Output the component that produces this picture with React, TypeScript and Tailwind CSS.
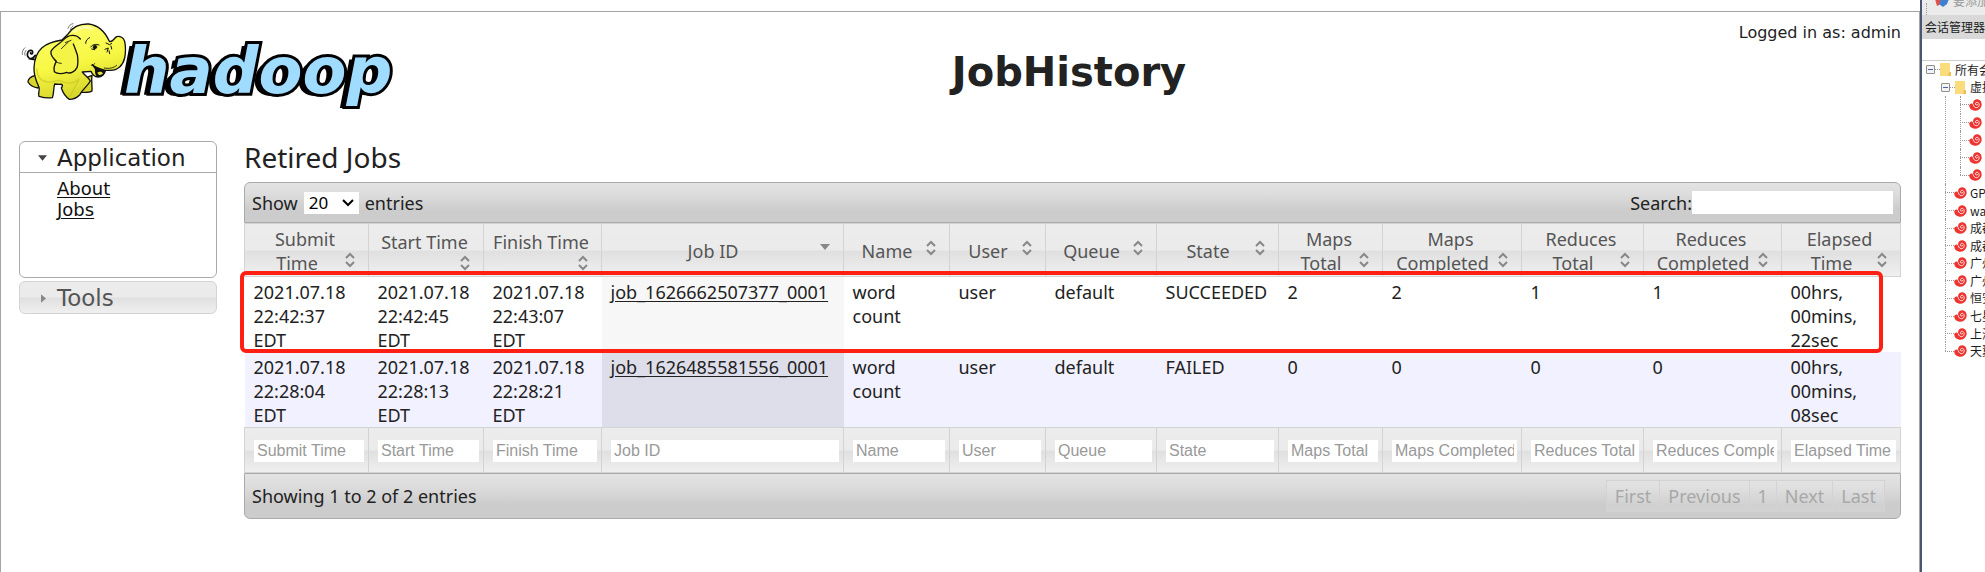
import React from "react";

type Column = { label: string; lines: string[]; width: string; sorted?: boolean };

const columns: Column[] = [
  { label: "Submit Time", lines: ["Submit", "Time"], width: "w-[124px]" },
  { label: "Start Time", lines: ["Start Time"], width: "w-[115px]" },
  { label: "Finish Time", lines: ["Finish Time"], width: "w-[118px]" },
  { label: "Job ID", lines: ["Job ID"], width: "w-[242px]", sorted: true },
  { label: "Name", lines: ["Name"], width: "w-[106px]" },
  { label: "User", lines: ["User"], width: "w-[96px]" },
  { label: "Queue", lines: ["Queue"], width: "w-[111px]" },
  { label: "State", lines: ["State"], width: "w-[122px]" },
  { label: "Maps Total", lines: ["Maps", "Total"], width: "w-[104px]" },
  { label: "Maps Completed", lines: ["Maps", "Completed"], width: "w-[139px]" },
  { label: "Reduces Total", lines: ["Reduces", "Total"], width: "w-[122px]" },
  { label: "Reduces Completed", lines: ["Reduces", "Completed"], width: "w-[138px]" },
  { label: "Elapsed Time", lines: ["Elapsed", "Time"], width: "w-[119px]" },
];

const jobs: string[][] = [
  ["2021.07.18 22:42:37 EDT", "2021.07.18 22:42:45 EDT", "2021.07.18 22:43:07 EDT", "job_1626662507377_0001", "word count", "user", "default", "SUCCEEDED", "2", "2", "1", "1", "00hrs, 00mins, 22sec"],
  ["2021.07.18 22:28:04 EDT", "2021.07.18 22:28:13 EDT", "2021.07.18 22:28:21 EDT", "job_1626485581556_0001", "word count", "user", "default", "FAILED", "0", "0", "0", "0", "00hrs, 00mins, 08sec"],
];

const sessions = ["GP", "wa", "成都", "成都", "广州", "广州", "恒安", "七星", "上海", "天翼"];

const barFill = "bg-[linear-gradient(#e3e3e3,#dcdcdc_30%,#cccccc_70%,#cccccc)]";
const cellFill = "bg-[linear-gradient(#ececec,#ebebeb_48%,#e0e0e0_52%,#f0f0f0)]";

function Elephant() {
  return (
    <svg viewBox="60 60 330 249" className="h-[83px] w-[110px] shrink-0" aria-hidden="true">
      <defs>
        <linearGradient id="hide" x1="0" y1="0" x2="0.3" y2="1">
          <stop offset="0" stopColor="#ffff73" />
          <stop offset="0.6" stopColor="#f7f743" />
          <stop offset="1" stopColor="#d6d52b" />
        </linearGradient>
      </defs>
      <g stroke="#111" strokeWidth="4" strokeLinejoin="round" strokeLinecap="round">
        <path d="M103 178C88 180 78 168 84 156C88 149 98 150 98 157C98 164 90 162 92 158M88 176C96 178 102 172 106 166" fill="none" strokeWidth="5" />
        <path d="M105 226C92 230 84 238 84 246C90 256 99 262 114 264L124 240Z" fill="#d8d62c" />
        <path d="M242 240L276 226C273 242 277 256 276 273C267 279 254 277 243 277Z" fill="#d8d62c" />
        <path
          d="M205 101C218 81 242 71 266 72C292 75 314 93 328 124C338 128 341 115 350 110C360 107 371 113 374 124C377 138 377 158 374 174C369 196 353 211 331 211L316 211C314 223 305 231 294 231C281 231 277 224 273 214L247 216C254 226 267 233 271 243C262 260 246 269 239 285C232 292 222 298 208 298C199 292 189 279 184 264C190 257 189 252 178 253L164 252C160 264 162 282 157 293C145 295 130 293 117 289C112 280 121 273 117 262C110 246 101 228 102 203C103 180 109 158 126 143C143 129 165 123 186 120Z"
          fill="url(#hide)"
        />
        <path
          d="M241 117C228 101 205 103 191 119C179 132 160 139 153 154C151 166 158 174 169 184C164 193 160 204 163 215C174 224 189 221 200 217C211 223 225 214 231 203C236 188 234 178 232 164C227 151 225 143 220 132"
          fill="#f4f447"
        />
        <path d="M196 128L213 121M184 146L205 126M164 182C172 189 178 190 184 190" fill="none" strokeWidth="2.5" />
        <path d="M277 194C286 203 302 207 315 211C314 223 304 228 294 229C285 225 288 214 286 206Z" fill="#111" />
        <path d="M292 218C299 213 307 216 309 220C303 227 296 227 292 218Z" fill="#e4e23a" stroke="none" />
        <path d="M274 196C278 197 283 194 284 191M313 204C327 207 342 204 350 196" fill="none" strokeWidth="2.5" />
        <path d="M257 130C257 122 262 116 269 113M318 129L329 134L335 130M315 148L325 144L321 156M327 152L329 161M333 138L335 147M272 141C278 133 287 131 297 135M275 147L284 149" fill="none" strokeWidth="3" />
        <path d="M280 137C284 133 291 135 291 142C289 148 282 149 279 145Z" fill="#111" strokeWidth="1" />
        <path d="M204 85C206 77 212 72 219 71M211 90C212 84 215 80 219 78M67 163C66 155 69 148 75 143M75 166C73 160 75 155 78 151" fill="none" stroke="#777" strokeWidth="3" />
      </g>
      <path d="M110 205C112 232 125 244 142 246C168 248 169 238 180 242C202 254 225 250 238 237C219 270 214 286 207 290" fill="none" stroke="#c3c321" strokeWidth="4" opacity="0.6" />
      <path d="M222 94C236 81 259 79 275 86" fill="none" stroke="#ffffc0" strokeWidth="9" strokeLinecap="round" opacity="0.7" />
    </svg>
  );
}

function SortIcon({ sorted }: { sorted?: boolean }) {
  return (
    <svg viewBox="0 0 16 16" className="float-right mt-px h-4 w-4" aria-hidden="true">
      {sorted ? (
        <path d="M3 4H13L8 10Z" fill="#888" />
      ) : (
        <path d="M4 6L8 2L12 6M4 10L8 14L12 10" fill="none" stroke="#888" strokeWidth="2" />
      )}
    </svg>
  );
}

function Snail() {
  return (
    <svg viewBox="0 0 38 36" className="h-3 w-[13px] shrink-0" aria-hidden="true">
      <path d="M0 19C3 13 9 12 12 16C10 6 18 0 26 1C35 3 39 12 37 21C34 31 25 36 16 35C6 34 0 28 0 19Z" fill="#ee3430" />
      <path d="M12 16C13 24 20 28 26 25C32 21 31 12 25 10C19 9 17 16 21 18C24 19 26 17 25 15" fill="none" stroke="#fff" strokeWidth="2.6" />
    </svg>
  );
}

function Folder() {
  return (
    <svg viewBox="0 0 11 13" className="h-[13px] w-[11px] shrink-0" aria-hidden="true">
      <path d="M0 0H10V9H11V13H0Z" fill="#fbdc7c" />
      <path d="M9 9H11V13H8Z" fill="#eebf55" />
    </svg>
  );
}

function Toggle() {
  return (
    <button aria-label="Collapse" className="flex h-[9px] w-[9px] shrink-0 items-center justify-center rounded-[1px] border border-[#8f8f8f] bg-[#f3f3f3]">
      <span className="h-px w-[5px] bg-[#4a64a8]" />
    </button>
  );
}

function SessionPanel() {
  return (
    <aside className="w-[65px] shrink-0 overflow-hidden border-l-2 border-[#4b5672] bg-white font-['Noto_Sans_CJK_SC',sans-serif] text-xs whitespace-nowrap text-[#1c1c1c]">
      <div className="flex h-[15px] items-end gap-1 overflow-hidden bg-[#ebebeb] pl-1 text-[#9a9a9a]">
        <span className="h-3 shrink-0 border-l border-dotted border-[#999]" />
        <svg viewBox="0 0 14 8" className="mb-2 ml-1 h-2 w-[14px] shrink-0" aria-hidden="true">
          <path d="M0 0H6L8 4L2 7Z" fill="#e2504a" />
          <path d="M6 0H14L12 5L8 8L4 5Z" fill="#3f7fd0" />
        </svg>
        <span className="pb-2 leading-3">要添加</span>
      </div>
      <div className="flex h-6 items-center bg-[#d9d9d9] pl-[3px]">会话管理器</div>
      <div className="h-[22px] border-b border-[#cfcfcf]" />
      <div className="flex h-[299px] flex-col pl-1">
        <div className="flex flex-1 items-center">
          <Toggle />
          <span className="w-[5px] shrink-0 border-t border-dotted border-[#999]" />
          <Folder />
          <span className="ml-1">所有会话</span>
        </div>
        <div className="flex flex-1 items-center pl-[15px]">
          <Toggle />
          <span className="w-[5px] shrink-0 border-t border-dotted border-[#999]" />
          <Folder />
          <span className="ml-1">虚拟机</span>
        </div>
        <div className="ml-[19px] flex flex-[5] flex-col border-l border-dotted border-[#999] pl-[14px]">
          {[0, 1, 2, 3, 4].map((n) => (
            <div key={n} className="relative flex flex-1 items-center">
              <span className={n === 4 ? "absolute top-0 left-0 h-1/2 border-l border-dotted border-[#999]" : "absolute top-0 left-0 h-full border-l border-dotted border-[#999]"} />
              <span className="w-[9px] shrink-0 border-t border-dotted border-[#999]" />
              <Snail />
            </div>
          ))}
        </div>
        {sessions.map((name, n) => (
          <div key={n} className="relative ml-[19px] flex flex-1 items-center">
            <span className={n === sessions.length - 1 ? "absolute top-0 left-0 h-1/2 border-l border-dotted border-[#999]" : "absolute top-0 left-0 h-full border-l border-dotted border-[#999]"} />
            <span className="w-[9px] shrink-0 border-t border-dotted border-[#999]" />
            <Snail />
            <span className="ml-[3px]">{name}</span>
          </div>
        ))}
      </div>
    </aside>
  );
}

function Sidebar() {
  return (
    <nav className="mr-[2px] ml-[18px] pt-[14px] font-['DejaVu_Sans',sans-serif]">
      <div className="rounded-md border border-[#aaaaaa]">
        <button className="flex h-[31px] w-full items-center border-b border-[#aaaaaa] pt-px text-left text-[23px] leading-7 text-[#212121]">
          <svg viewBox="0 0 10 6" className="mr-[10px] ml-[18px] h-[6px] w-[9px]" aria-hidden="true">
            <path d="M0 0H10L5 6Z" fill="#444" />
          </svg>
          Application
        </button>
        <ul className="h-[104px] pt-[5px] pl-[37px] text-lg leading-[21px] text-[#111]">
          <li><a href="#about" className="underline underline-offset-2">About</a></li>
          <li><a href="#jobs" className="underline underline-offset-2">Jobs</a></li>
        </ul>
      </div>
      <button className={`mt-[3px] flex h-[33px] w-full items-center rounded-md border border-[#d3d3d3] pt-px text-left text-[23px] leading-7 text-[#555] ${cellFill}`}>
        <svg viewBox="0 0 6 10" className="mr-[11px] ml-[21px] h-[9px] w-[5px]" aria-hidden="true">
          <path d="M0 0V10L6 5Z" fill="#888" />
        </svg>
        Tools
      </button>
    </nav>
  );
}

function JobsTable() {
  return (
    <section className="pr-[18px] pl-[25px]">
      <h2 className="text-[28px] leading-[32px]">Retired Jobs</h2>
      <div className={`mt-[9px] flex h-[41px] items-center justify-between rounded-t-md border border-[#aaaaaa] px-[7px] ${barFill}`}>
        <label className="flex items-center gap-[6px]">
          Show
          <span className="relative flex items-center">
            <select className="h-[22px] w-[55px] appearance-none bg-white pl-[5px] text-[17px] leading-[22px] text-black" defaultValue="20">
              <option>20</option>
              <option>50</option>
            </select>
            <svg viewBox="0 0 12 8" className="pointer-events-none absolute right-[5px] h-2 w-3" aria-hidden="true">
              <path d="M1 1L6 6L11 1" fill="none" stroke="#000" strokeWidth="2" />
            </svg>
          </span>
          entries
        </label>
        <label className="flex items-center">
          Search:
          <input type="text" className="h-[23px] w-[201px] bg-white px-1" />
        </label>
      </div>
      <div className="relative">
        <table className="w-full table-fixed border-collapse">
          <colgroup>
            {columns.map((c) => (
              <col key={c.label} className={c.width} />
            ))}
          </colgroup>
          <thead>
            <tr className={cellFill}>
              {columns.map((c) => (
                <th key={c.label} scope="col" className="h-[53px] overflow-hidden border border-[#d3d3d3] pt-px pr-[10px] pb-0 pl-[7px] align-middle font-normal text-[#555]">
                  <div className="max-h-[50px] text-center leading-6 whitespace-nowrap">
                    {c.lines.length > 1 && <div>{c.lines[0]}</div>}
                    <div>
                      {c.lines[c.lines.length - 1]}
                      <SortIcon sorted={c.sorted} />
                    </div>
                  </div>
                </th>
              ))}
            </tr>
          </thead>
          <tbody>
            {jobs.map((job, r) => (
              <tr key={job[3]} className={r % 2 ? "bg-[#f1f1ff]" : "bg-white"}>
                {job.map((value, i) => (
                  <td
                    key={i}
                    className={`h-[75px] pt-[3px] pb-0 pl-[9px] align-top leading-6 ${i === 3 ? (r % 2 ? "bg-[#dedeea]" : "bg-[#f7f7f7]") : ""} ${i < 3 ? "pr-[16px]" : i === 4 || i === 12 ? "pr-[30px]" : "pr-0"}`}
                  >
                    {i === 3 ? (
                      <a href={`#${value}`} className="underline underline-offset-2">{value}</a>
                    ) : (
                      value
                    )}
                  </td>
                ))}
              </tr>
            ))}
          </tbody>
          <tfoot>
            <tr className={cellFill}>
              {columns.map((c) => (
                <th key={c.label} className="h-[45px] border border-[#d3d3d3] pt-[2px] pr-1 pb-0 pl-[9px] align-middle font-normal">
                  <input
                    type="text"
                    aria-label={`Filter by ${c.label}`}
                    placeholder={c.label}
                    className="block h-[22px] w-full bg-white px-[3px] font-['Liberation_Sans',sans-serif] text-base leading-[22px] placeholder:text-[#999]"
                  />
                </th>
              ))}
            </tr>
          </tfoot>
        </table>
        <div className="pointer-events-none absolute top-[48px] right-[18px] -left-1 h-[82px] rounded-md border-4 border-[#ff2013]" />
      </div>
      <div className={`flex h-[46px] items-center justify-between rounded-b-md border border-[#aaaaaa] pr-[15px] pl-[7px] ${barFill}`}>
        <span>Showing 1 to 2 of 2 entries</span>
        <div className="flex border-l border-[#d3d3d3] text-[#a8a8a8]">
          {["First", "Previous", "1", "Next", "Last"].map((p) => (
            <button key={p} disabled className="h-8 border-y border-r border-[#d3d3d3] bg-white/10 px-2 leading-[30px]">
              {p}
            </button>
          ))}
        </div>
      </div>
    </section>
  );
}

export default function App() {
  return (
    <div className="flex min-h-screen bg-white font-['Noto_Sans',sans-serif] text-lg text-[#222]">
      <div className="flex min-w-0 flex-1 flex-col pt-[11px]">
        <main className="grid flex-1 grid-cols-[218px_1fr] grid-rows-[auto_1fr] border-t border-r border-l border-[#a5a5a5]">
          <header className="contents">
            <a href="#home" aria-label="hadoop" className="flex h-[115px] items-start pt-2 pl-[19px]">
              <Elephant />
              <span className="-ml-[6px] pt-4 font-['DejaVu_Sans',sans-serif] text-[64px] leading-[70px] font-bold text-[#9fdcff] italic [-webkit-text-stroke:6px_#000] [paint-order:stroke_fill] [text-shadow:-3px_1px_0_#000,-6px_2px_0_#000]">
                hadoop
              </span>
            </a>
            <div className="font-['DejaVu_Sans',sans-serif]">
              <div className="pt-[9px] pr-[18px] text-right text-base leading-6">Logged in as: admin</div>
              <h1 className="pt-[3px] text-center text-[40px] leading-[48px] font-bold">JobHistory</h1>
            </div>
          </header>
          <Sidebar />
          <div className="pt-[14px]">
            <JobsTable />
          </div>
        </main>
      </div>
      <SessionPanel />
    </div>
  );
}
